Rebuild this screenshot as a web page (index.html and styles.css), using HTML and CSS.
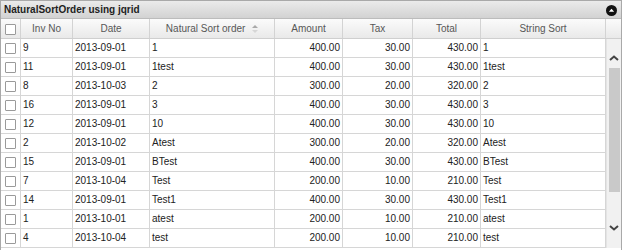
FILE: index.html
```html
<!DOCTYPE html>
<html lang="en">
<head>
    <meta charset="UTF-8">
    <title>NaturalSortOrder using jqrid</title>
    <link rel="stylesheet" href="styles.css">
</head>
<body>
    <div class="grid">
        <!-- Caption bar -->
        <div class="caption">
            <span>NaturalSortOrder using jqrid</span>
            <svg class="collapse" width="11" height="11" viewBox="0 0 11 11">
                <circle cx="5.5" cy="5.5" r="5.5" fill="#111"/>
                <path d="M2.8 6.8 L5.5 3.8 L8.2 6.8 Z" fill="#fff"/>
            </svg>
        </div>

        <!-- Column headers -->
        <div class="row head">
            <div class="cell cb"><span class="box"></span></div>
            <div class="cell">Inv No</div>
            <div class="cell">Date</div>
            <div class="cell sorted">Natural Sort order
                <svg class="sort" width="6" height="8" viewBox="0 0 6 8">
                    <path d="M0 3 L3 0 L6 3 Z" fill="#a9a9a9"/>
                    <path d="M0 5 L3 8 L6 5 Z" fill="#d6d6d6"/>
                </svg>
            </div>
            <div class="cell">Amount</div>
            <div class="cell">Tax</div>
            <div class="cell">Total</div>
            <div class="cell">String Sort</div>
            <div class="cell pad"></div>
        </div>

        <!-- Body with rows and scrollbar -->
        <div class="body">
            <div class="rows" id="rows"></div>
            <div class="scrollbar">
                <div class="sb-btn up">
                    <svg width="10" height="6" viewBox="0 0 10 6"><polyline points="1,5 5,1.5 9,5" fill="none" stroke="#444" stroke-width="2"/></svg>
                </div>
                <div class="thumb"></div>
                <div class="sb-btn down">
                    <svg width="10" height="6" viewBox="0 0 10 6"><polyline points="1,1 5,4.5 9,1" fill="none" stroke="#444" stroke-width="2"/></svg>
                </div>
            </div>
        </div>
    </div>

    <script>
        // Invoice data
        const data = [
            [9, '2013-09-01', '1', '400.00', '30.00', '430.00', '1'],
            [11, '2013-09-01', '1test', '400.00', '30.00', '430.00', '1test'],
            [8, '2013-10-03', '2', '300.00', '20.00', '320.00', '2'],
            [16, '2013-09-01', '3', '400.00', '30.00', '430.00', '3'],
            [12, '2013-09-01', '10', '400.00', '30.00', '430.00', '10'],
            [2, '2013-10-02', 'Atest', '300.00', '20.00', '320.00', 'Atest'],
            [15, '2013-09-01', 'BTest', '400.00', '30.00', '430.00', 'BTest'],
            [7, '2013-10-04', 'Test', '200.00', '10.00', '210.00', 'Test'],
            [14, '2013-09-01', 'Test1', '400.00', '30.00', '430.00', 'Test1'],
            [1, '2013-10-01', 'atest', '200.00', '10.00', '210.00', 'atest'],
            [4, '2013-10-04', 'test', '200.00', '10.00', '210.00', 'test']
        ];
        const rows = document.getElementById('rows');
        data.forEach(r => {
            const row = document.createElement('div');
            row.className = 'row';
            row.innerHTML =
                '<div class="cell cb"><span class="box"></span></div>' +
                '<div class="cell">' + r[0] + '</div>' +
                '<div class="cell">' + r[1] + '</div>' +
                '<div class="cell">' + r[2] + '</div>' +
                '<div class="cell num">' + r[3] + '</div>' +
                '<div class="cell num">' + r[4] + '</div>' +
                '<div class="cell num">' + r[5] + '</div>' +
                '<div class="cell">' + r[6] + '</div>';
            rows.appendChild(row);
        });
    </script>
</body>
</html>
```

FILE: styles.css
```css
* {
    margin: 0;
    padding: 0;
    box-sizing: border-box;
}
body {
    font-family: "Liberation Sans", Arial, sans-serif;
    font-size: 10px;
    color: #222;
    background: #fff;
}
.grid {
    width: 622px;
    height: 252px;
    border: 1px solid #a9a9a9;
    overflow: hidden;
}
/* Caption */
.caption {
    height: 18px;
    display: flex;
    align-items: center;
    justify-content: space-between;
    padding: 0 4px 0 3px;
    background: linear-gradient(#ebebeb, #d2d2d2);
    border-bottom: 1px solid #bcbcbc;
    font-weight: bold;
    color: #1e1e1e;
}
.collapse {
    margin-top: 2px;
}
/* Rows */
.row {
    display: grid;
    grid-template-columns: 20px 52px 77px 125px 68px 70px 68px 125px;
    height: 19px;
    border-bottom: 1px solid #d6d6d6;
}
.cell {
    border-right: 1px solid #d6d6d6;
    padding: 0 2px 0 2px;
    line-height: 18px;
    white-space: nowrap;
    overflow: hidden;
}
.cell.num {
    text-align: right;
}
.cell.cb {
    display: flex;
    align-items: center;
    justify-content: center;
    padding: 0;
}
.box {
    width: 11px;
    height: 11px;
    border: 1px solid #9a9a9a;
    background: #fff;
    border-radius: 1px;
}
/* Header */
.row.head {
    grid-template-columns: 20px 52px 77px 125px 68px 70px 68px 125px 15px;
    height: 20px;
    background: linear-gradient(#fbfbfb, #e9e9e9);
    border-bottom: 1px solid #cfcfcf;
}
.head .cell {
    text-align: center;
    color: #575757;
    line-height: 19px;
    border-right-color: #d3d3d3;
}
.head .cell.cb {
    padding-top: 1px;
}
.head .cell.pad {
    border-right: none;
}
.sort {
    margin-left: 4px;
    vertical-align: -1px;
}
/* Body and scrollbar */
.body {
    display: flex;
}
.rows {
    width: 605px;
}
.scrollbar {
    width: 15px;
    height: 209px;
    background: #f1f1f1;
    border-left: 1px solid #e4e4e4;
    display: flex;
    flex-direction: column;
    align-items: center;
}
.sb-btn {
    display: flex;
    align-items: center;
    justify-content: center;
    width: 100%;
}
.sb-btn.up {
    height: 29px;
    padding-top: 9px;
}
.thumb {
    width: 11px;
    height: 124px;
    background: #c9c9c9;
}
.sb-btn.down {
    height: 47px;
    padding-top: 24px;
}
```
